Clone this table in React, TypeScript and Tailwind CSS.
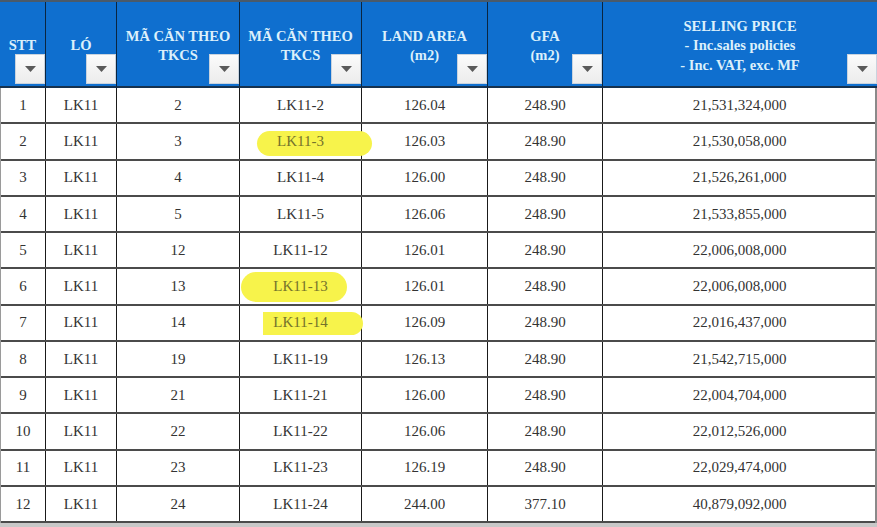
import React from "react";

const rows = [
  ["1", "LK11", "2", "LK11-2", "126.04", "248.90", "21,531,324,000"],
  ["2", "LK11", "3", "LK11-3", "126.03", "248.90", "21,530,058,000"],
  ["3", "LK11", "4", "LK11-4", "126.00", "248.90", "21,526,261,000"],
  ["4", "LK11", "5", "LK11-5", "126.06", "248.90", "21,533,855,000"],
  ["5", "LK11", "12", "LK11-12", "126.01", "248.90", "22,006,008,000"],
  ["6", "LK11", "13", "LK11-13", "126.01", "248.90", "22,006,008,000"],
  ["7", "LK11", "14", "LK11-14", "126.09", "248.90", "22,016,437,000"],
  ["8", "LK11", "19", "LK11-19", "126.13", "248.90", "21,542,715,000"],
  ["9", "LK11", "21", "LK11-21", "126.00", "248.90", "22,004,704,000"],
  ["10", "LK11", "22", "LK11-22", "126.06", "248.90", "22,012,526,000"],
  ["11", "LK11", "23", "LK11-23", "126.19", "248.90", "22,029,474,000"],
  ["12", "LK11", "24", "LK11-24", "244.00", "377.10", "40,879,092,000"],
];

const headers: string[][] = [
  ["STT"],
  ["LÓ"],
  ["MÃ CĂN THEO", "TKCS"],
  ["MÃ CĂN THEO", "TKCS"],
  ["LAND AREA", "(m2)"],
  ["GFA", "(m2)"],
  ["SELLING PRICE", "- Inc.sales policies", "- Inc. VAT, exc. MF"],
];

const highlights: Record<number, string> = {
  1: "left-[17px] top-[7px] w-[115px] h-[25px] rounded-full",
  5: "left-[1px] top-[3px] w-[106px] h-[30px] rounded-full",
  6: "left-[23px] top-[6px] w-[100px] h-[23px] rounded-l-[6px] rounded-r-full",
};

function FilterButton() {
  return (
    <div className="absolute right-0 bottom-[2px] w-[30px] h-[30px] bg-gradient-to-b from-[#fbfbfb] to-[#ececec] border border-[#c9d3de] flex items-center justify-center">
      <svg width="11" height="6" viewBox="0 0 11 6">
        <polygon points="0,0 11,0 5.5,6" fill="#5a5a5a" />
      </svg>
    </div>
  );
}

export default function App() {
  return (
    <div className="w-[877px] h-[527px] bg-white overflow-hidden font-['Liberation_Serif','Times_New_Roman',serif]">
      <div className="grid grid-cols-[46px_71px_123px_122px_126px_115px_274px] border-t-2 border-[#4a5a6a]">
        {headers.map((lines, i) => (
          <div
            key={i}
            className={`relative h-[86px] bg-[#0f6fcf] border-b-2 border-[#16324f] flex flex-col items-center justify-center pt-[4px] ${
              i < 6 ? "border-r border-r-[#0a2540]" : ""
            }`}
          >
            {lines.map((l, j) => (
              <div
                key={j}
                className="text-[14.5px] leading-[19.5px] font-bold text-[#dcf0fb] whitespace-nowrap"
              >
                {l}
              </div>
            ))}
            <FilterButton />
          </div>
        ))}
      </div>
      <div className="border-l border-[#9a9a9a] border-r-2 border-r-[#8a8a8a] w-[877px]">
        {rows.map((r, ri) => (
          <div
            key={ri}
            className="grid grid-cols-[45px_71px_123px_122px_126px_115px_273px] h-[36.25px] border-b-2 border-[#4b4b4b]"
          >
            {r.map((c, ci) => {
              const hl = ci === 3 ? highlights[ri] : undefined;
              return (
                <div
                  key={ci}
                  className={`relative flex items-center justify-center text-[15px] ${
                    hl ? "text-[#74722c]" : "text-[#333333]"
                  } ${ci < 6 ? "border-r border-[#1a1a1a]" : ""}`}
                >
                  {hl && <span className={`absolute bg-[#f7f34b] ${hl}`} />}
                  <span className="relative">{c}</span>
                </div>
              );
            })}
          </div>
        ))}
      </div>
      <div className="h-[6px] bg-[#c8c8c8]" />
    </div>
  );
}
